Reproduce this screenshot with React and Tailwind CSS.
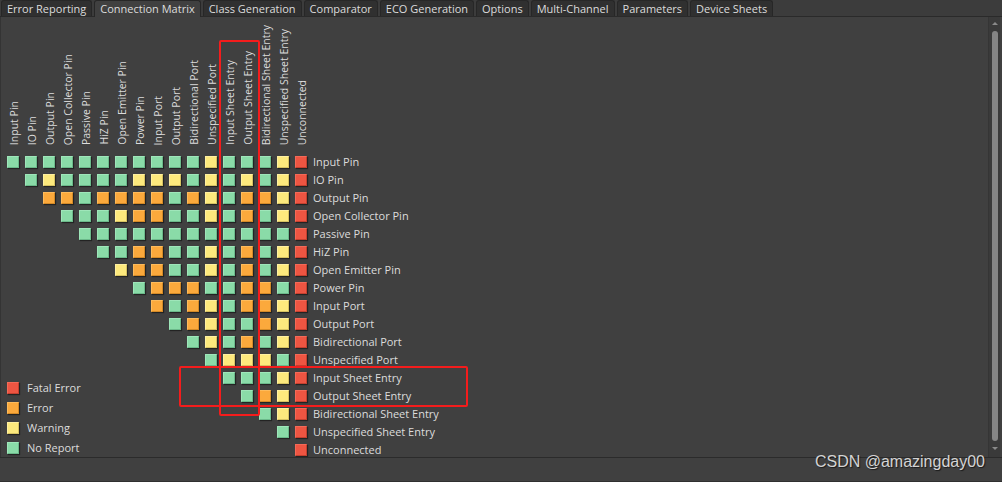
import React from 'react';

const tabs = [
  'Error Reporting',
  'Connection Matrix',
  'Class Generation',
  'Comparator',
  'ECO Generation',
  'Options',
  'Multi-Channel',
  'Parameters',
  'Device Sheets',
];

const names = [
  'Input Pin',
  'IO Pin',
  'Output Pin',
  'Open Collector Pin',
  'Passive Pin',
  'HiZ Pin',
  'Open Emitter Pin',
  'Power Pin',
  'Input Port',
  'Output Port',
  'Bidirectional Port',
  'Unspecified Port',
  'Input Sheet Entry',
  'Output Sheet Entry',
  'Bidirectional Sheet Entry',
  'Unspecified Sheet Entry',
  'Unconnected',
];

// row i starts at column i
const matrix = [
  'GGGGGGGGGGGYGGGYR',
  'GYGGGGYYYGYGYGYR',
  'OOGOOOOGOYGOOYR',
  'GGGYOOGGYGOGYR',
  'GGGGGGGGGGGGR',
  'GGOOGGYGOGYR',
  'YOOGGYGOGYR',
  'GOOOGGOOGR',
  'OGOYGOOYR',
  'GOYGGOYR',
  'GYGOGYR',
  'GYYYGR',
  'GGGYR',
  'GOYR',
  'GYR',
  'GR',
  'R',
];

const swatch = {
  G: 'bg-[#8adba8] border-b-[#6bb98a] border-r-[#6bb98a] border-t-[#9fe6ba] border-l-[#9fe6ba]',
  Y: 'bg-[#fde97d] border-b-[#d6c262] border-r-[#d6c262] border-t-[#fff0a0] border-l-[#fff0a0]',
  O: 'bg-[#fba93c] border-b-[#d48a27] border-r-[#d48a27] border-t-[#fdbb5c] border-l-[#fdbb5c]',
  R: 'bg-[#ee5542] border-b-[#c4402f] border-r-[#c4402f] border-t-[#f36a58] border-l-[#f36a58]',
};

const legend = [
  ['R', 'Fatal Error'],
  ['O', 'Error'],
  ['Y', 'Warning'],
  ['G', 'No Report'],
];

const Swatch = ({ kind }) => (
  <div className={`w-[12px] h-[12px] border shadow-[1px_1px_1px_rgba(0,0,0,0.45)] ${swatch[kind]}`} />
);

export default function App() {
  return (
    <div className="relative w-[1002px] h-[482px] bg-[#404040] flex flex-col overflow-hidden font-['Open_Sans',sans-serif] text-[#dcdcdc]">
      {/* tabs */}
      <div className="h-[17px] flex items-end gap-[2px] pl-[1px] bg-[#3c3c3c] border-b border-[#2a2a2a]">
        {tabs.map((t) => (
          <div
            key={t}
            className={`h-[16px] px-[5px] rounded-t-[3px] border border-b-0 border-[#272727] text-[11px] leading-[15px] whitespace-nowrap ${
              t === 'Connection Matrix' ? 'bg-[#404040] -mb-px h-[17px]' : 'bg-[#303030]'
            }`}
          >
            {t}
          </div>
        ))}
      </div>

      <div className="flex flex-1 min-h-0 border-l border-[#343434]">
        <div className="relative flex-1 overflow-hidden">
          <div className="grid grid-cols-[repeat(17,18px)_auto] grid-rows-[136px_repeat(17,18px)] pl-[3px]">
            {names.map((n, j) => (
              <div
                key={'h' + j}
                style={{ gridColumnStart: j + 1, gridRowStart: 1 }}
                className="flex items-end justify-center pb-[8px]"
              >
                <span className="[writing-mode:vertical-rl] rotate-180 text-[10.5px] leading-[12px] whitespace-nowrap translate-x-[1px]">
                  {n}
                </span>
              </div>
            ))}

            {matrix.map((row, i) =>
              row.split('').map((k, n) => (
                <div
                  key={i + '-' + n}
                  style={{ gridColumnStart: i + n + 1, gridRowStart: i + 2 }}
                  className="flex items-center justify-center"
                >
                  <Swatch kind={k} />
                </div>
              ))
            )}

            {names.map((n, i) => (
              <div
                key={'l' + i}
                style={{ gridColumnStart: 18, gridRowStart: i + 2 }}
                className="flex items-center pl-[3px] text-[11px] whitespace-nowrap"
              >
                {n}
              </div>
            ))}

            <div className="col-start-1 col-end-9 row-start-14 row-end-19 flex flex-col gap-[8px] pt-[13px] pl-[3px]">
              {legend.map(([k, label]) => (
                <div key={label} className="flex items-center gap-[8px] h-[12px]">
                  <Swatch kind={k} />
                  <span className="text-[11px] leading-[12px]">{label}</span>
                </div>
              ))}
            </div>
          </div>

          {/* red annotation boxes */}
          <div className="absolute left-[218px] top-[23px] w-[41px] h-[376px] border-2 border-[#f41c1c] rounded-[2px]" />
          <div className="absolute left-[178px] top-[349px] w-[289px] h-[41px] border-2 border-[#f41c1c] rounded-[2px]" />
        </div>

        {/* scrollbar */}
        <div className="w-[12px] mr-[2px] bg-[#3a3a3a] border-l border-[#353535] flex flex-col items-center pt-[5px] pb-[7px]">
          <div className="w-0 h-0 border-x-[3px] border-x-transparent border-b-[3px] border-b-[#8a8a8a]" />
          <div className="w-[6px] flex-1 mt-[6px] mb-[6px] rounded-full bg-[#858585]" />
          <div className="w-0 h-0 border-x-[3px] border-x-transparent border-t-[3px] border-t-[#8a8a8a]" />
        </div>
      </div>

      <div className="h-[25px] bg-[#404040] border-t border-[#2b2b2b] border-b border-b-[#2f2f2f]" />

      <div className="absolute right-[17px] top-[454px] text-[16px] leading-[16px] font-['Liberation_Sans',sans-serif] text-[#d4d4d4] [text-shadow:1px_1px_1px_rgba(0,0,0,0.6)]">
        CSDN @amazingday00
      </div>
    </div>
  );
}
